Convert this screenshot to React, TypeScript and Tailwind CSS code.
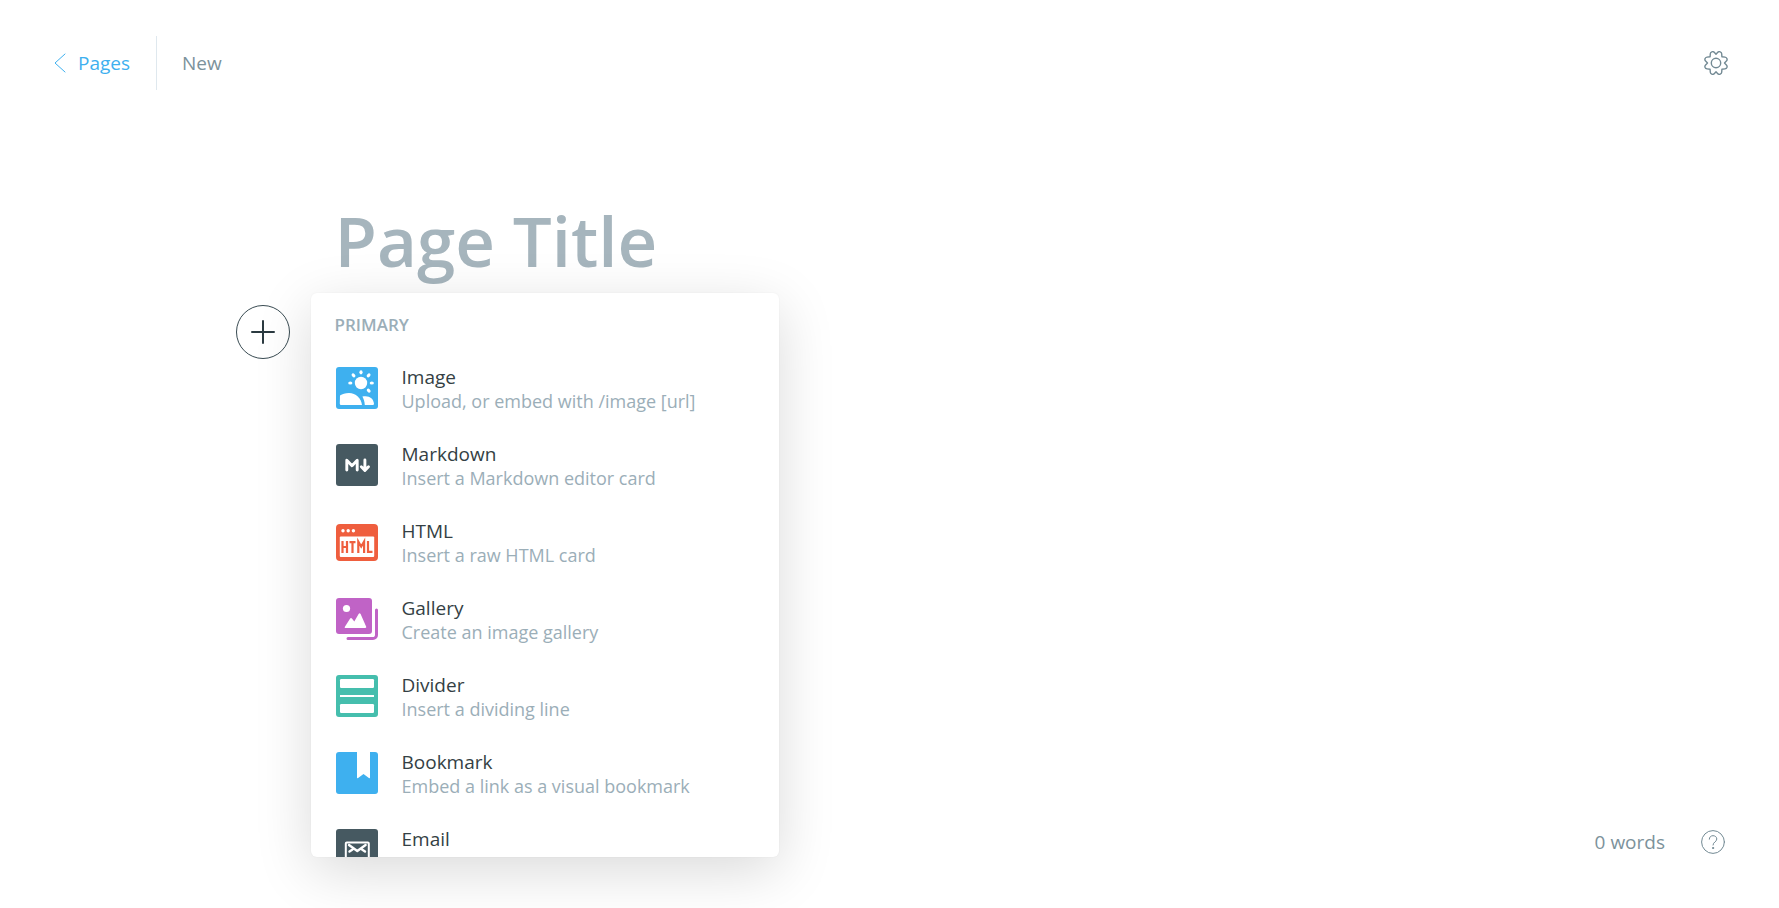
import type { ReactNode } from "react";

type Card = { name: string; description?: string; icon: ReactNode };

const iconClass = "block size-[42px] shrink-0";

function ImageIcon() {
  return (
    <svg viewBox="0 0 42 42" className={iconClass} aria-hidden="true">
      <rect width="42" height="42" rx="3" fill="#3eb0ef" />
      <circle cx="25" cy="16" r="6.2" fill="#fff" />
      <g fill="#fff">
        <ellipse cx="25" cy="5.3" rx="1.6" ry="2.1" />
        <ellipse cx="14.3" cy="16" rx="2.1" ry="1.6" />
        <ellipse cx="35.8" cy="16" rx="2.1" ry="1.6" />
        <ellipse cx="17.5" cy="8.4" rx="2.2" ry="1.6" transform="rotate(45 17.5 8.4)" />
        <ellipse cx="32.6" cy="8.4" rx="2.2" ry="1.6" transform="rotate(-45 32.6 8.4)" />
        <ellipse cx="32.7" cy="23.6" rx="2.2" ry="1.6" transform="rotate(45 32.7 23.6)" />
        <path d="M4 28.6C6.5 27 9 26 13 26c7 0 12 5 13 12H5a1.2 1.2 0 0 1-1.2-1.2z" />
        <path d="M26.4 29.6c6-1.6 11.2 1.4 11.6 7.2q0 1.2-1.2 1.2h-8c-.2-3.2-1-5.9-2.4-8.4z" />
      </g>
    </svg>
  );
}

function MarkdownIcon() {
  return (
    <svg viewBox="0 0 42 42" className={iconClass} fill="none" stroke="#fff" strokeWidth="2.9" strokeLinecap="round" strokeLinejoin="round" aria-hidden="true">
      <rect width="42" height="42" rx="3" fill="#465961" stroke="none" />
      <path d="M10.8 26V16.2l5.2 5.6 5.2-5.6V26" />
      <path d="M28.9 16v9.5M25.3 22.8l3.6 3.6 3.6-3.6" />
    </svg>
  );
}

function HtmlIcon() {
  return (
    <svg viewBox="0 0 42 42" className={iconClass} fill="none" aria-hidden="true">
      <rect y="3" width="42" height="37" rx="4" fill="#ef5e3e" />
      <rect x="3.8" y="15.5" width="34.4" height="20.5" rx="1" fill="#fff" />
      <g fill="#fff">
        <circle cx="7" cy="9.7" r="1.7" />
        <circle cx="12.2" cy="9.7" r="1.7" />
        <circle cx="17.4" cy="9.7" r="1.7" />
      </g>
      <path d="M6.5 20v12M11 20v12M6.5 26H11M13.5 21.1h6M16.500 21v11M22.300 32V20.500l2.900 5 2.900-5V32M32 20v10.900h4.500" stroke="#ef5e3e" strokeWidth="2.2" />
    </svg>
  );
}

function GalleryIcon() {
  return (
    <svg viewBox="0 0 42 42" className={iconClass} aria-hidden="true">
      <rect width="36" height="36" rx="3" fill="#c063c6" />
      <circle cx="10.5" cy="10.5" r="3.6" fill="#fff" />
      <path d="M9.500 30c-.8 0-1-.6-.6-1.300l5.100-8c.6-.9 1.400-.9 2.100 0l2.200 2.800 4.300-7.400c.6-1 1.400-1 2 0l5.500 12.500c.4.800 0 1.400-.8 1.400z" fill="#fff" />
      <path d="M40.500 12v25a3.500 3.500 0 0 1-3.500 3.500H12" fill="none" stroke="#c063c6" strokeWidth="3" strokeLinecap="round" />
    </svg>
  );
}

function DividerIcon() {
  return (
    <svg viewBox="0 0 42 42" className={iconClass} aria-hidden="true">
      <rect width="42" height="42" rx="3" fill="#45bead" />
      <g fill="#fff">
        <rect x="4" y="4" width="34" height="9" rx="1.2" />
        <rect x="4" y="20" width="34" height="2" />
        <rect x="4" y="29" width="34" height="9" rx="1.2" />
      </g>
    </svg>
  );
}

function BookmarkIcon() {
  return (
    <svg viewBox="0 0 42 42" className={iconClass} aria-hidden="true">
      <rect width="42" height="42" rx="3" fill="#3eb0ef" />
      <path d="M21 0h13v25.500c0 .6-.6.900-1.100.5L27.500 22l-5.400 4c-.5.400-1.100.1-1.100-.5z" fill="#fff" />
    </svg>
  );
}

function EmailIcon() {
  return (
    <svg viewBox="0 0 42 42" className={iconClass} fill="none" stroke="#fff" strokeWidth="2" strokeLinecap="round" strokeLinejoin="round" aria-hidden="true">
      <rect width="42" height="42" rx="3" fill="#465961" stroke="none" />
      <rect x="9.8" y="13.5" width="23" height="17" rx="1" />
      <path d="M13 16l8.300 6 8.300-6M13.500 22.500l3-2M29 22.500l-3-2" strokeWidth="2.4" />
    </svg>
  );
}

const cards: Card[] = [
  { name: "Image", description: "Upload, or embed with /image [url]", icon: <ImageIcon /> },
  { name: "Markdown", description: "Insert a Markdown editor card", icon: <MarkdownIcon /> },
  { name: "HTML", description: "Insert a raw HTML card", icon: <HtmlIcon /> },
  { name: "Gallery", description: "Create an image gallery", icon: <GalleryIcon /> },
  { name: "Divider", description: "Insert a dividing line", icon: <DividerIcon /> },
  { name: "Bookmark", description: "Embed a link as a visual bookmark", icon: <BookmarkIcon /> },
  { name: "Email", icon: <EmailIcon /> },
];

function CardMenu() {
  return (
    <section className="absolute -top-3 -left-6 max-h-[564px] w-[468px] overflow-hidden rounded-md bg-white pt-5 shadow-[0_0_2px_rgba(0,0,0,0.05),0_14px_56px_rgba(0,0,0,0.15)]">
      <h2 className="px-6 text-[17px] leading-6 font-semibold text-[#9baeb8]">PRIMARY</h2>
      <ul className="mt-3">
        {cards.map((card) => (
          <li key={card.name}>
            <button type="button" className="flex h-[77px] w-full items-center gap-6 px-[25px] pt-px text-left">
              {card.icon}
              <span className="flex h-[50px] flex-col pt-[2px]">
                <span className="text-[19px] leading-6 text-[#343f44]">{card.name}</span>
                <span className="text-[18px] leading-6 text-[#9baeb8]">{card.description}</span>
              </span>
            </button>
          </li>
        ))}
      </ul>
    </section>
  );
}

export default function App() {
  return (
    <div className="flex min-h-screen flex-col bg-white font-['Open_Sans','Noto_Sans',sans-serif] text-[#738a94]">
      <header className="flex h-[126px] items-center justify-between px-[51px]">
        <nav className="flex items-center">
          <a href="#pages" className="flex items-center gap-3 text-[19px] leading-6 text-[#3eb0ef]">
            <svg viewBox="0 0 15 20" className="h-5 w-[15px]" fill="none" stroke="currentColor" strokeLinecap="round" strokeLinejoin="round" aria-hidden="true">
              <path d="M14 1L4 10l10 9" />
            </svg>
            Pages
          </a>
          <span className="ml-[26px] h-[54px] w-px bg-[#dfe8ee]" />
          <span className="ml-[25px] text-[19px] leading-6 text-[#7c929b]">New</span>
        </nav>
        <button type="button" aria-label="Settings">
          <svg viewBox="0 0 24 24" className="size-6" fill="none" stroke="currentColor" strokeWidth="1.4" strokeLinejoin="round" aria-hidden="true">
            <circle cx="12" cy="12" r="4.7" />
            <path d="M12 3.200L14 1.100Q15 .3 16.200.8 17.600 1.300 17.700 2.700L17.900 5.700 21 6.100Q22.500 6.300 23 7.700 23.400 9.200 22.400 10.100L20.500 12 22.400 13.900Q23.400 14.900 23 16.300 22.500 17.700 21 17.900L17.900 18.300 17.700 21.300Q17.600 22.700 16.200 23.200 15 23.700 14 22.900L12 20.800 10 22.900Q9 23.700 7.800 23.200 6.400 22.700 6.300 21.300L6.100 18.300 3 17.900Q1.500 17.700 1 16.300.6 14.900 1.600 13.900L3.500 12 1.600 10.100Q.6 9.200 1 7.700 1.500 6.300 3 6.100L6.100 5.700 6.300 2.700Q6.400 1.300 7.800.8 9 .3 10 1.100z" />
          </svg>
        </button>
      </header>

      <main className="mx-auto w-full max-w-[1110px] flex-1 pt-[70px]">
        <input
          type="text"
          aria-label="Page title"
          placeholder="Page Title"
          className="block h-[88px] w-full text-[69px] leading-[88px] font-semibold text-[#15171a] outline-none placeholder:text-[#a6b5bd] placeholder:opacity-100"
        />
        <div className="relative mt-[21px] h-[54px]">
          <button
            type="button"
            aria-label="Add a card"
            className="absolute top-0 -left-[99px] flex size-[54px] items-center justify-center rounded-full border border-[#394b52] bg-white text-[#2b3a40]"
          >
            <svg viewBox="0 0 24 24" className="size-6" fill="none" stroke="currentColor" strokeWidth="2" strokeLinecap="round" aria-hidden="true">
              <path d="M12 1v22M1 12h22" />
            </svg>
          </button>
          <CardMenu />
        </div>
      </main>

      <footer className="flex items-center justify-end gap-9 px-[54px] pb-[54px]">
        <span className="text-[19px] leading-6 text-[#7c929b]">0 words</span>
        <a href="#help" aria-label="Help">
          <svg viewBox="0 0 24 24" className="size-6" fill="none" stroke="currentColor" strokeWidth="1" strokeLinecap="round" aria-hidden="true">
            <circle cx="12" cy="12" r="11.4" />
            <path d="M8.300 9.200C8.300 7 9.900 5.700 12 5.700s3.800 1.300 3.800 3.300c0 2.900-3.800 2.900-3.800 6" />
            <circle cx="12" cy="18" r=".6" fill="currentColor" />
          </svg>
        </a>
      </footer>
    </div>
  );
}
